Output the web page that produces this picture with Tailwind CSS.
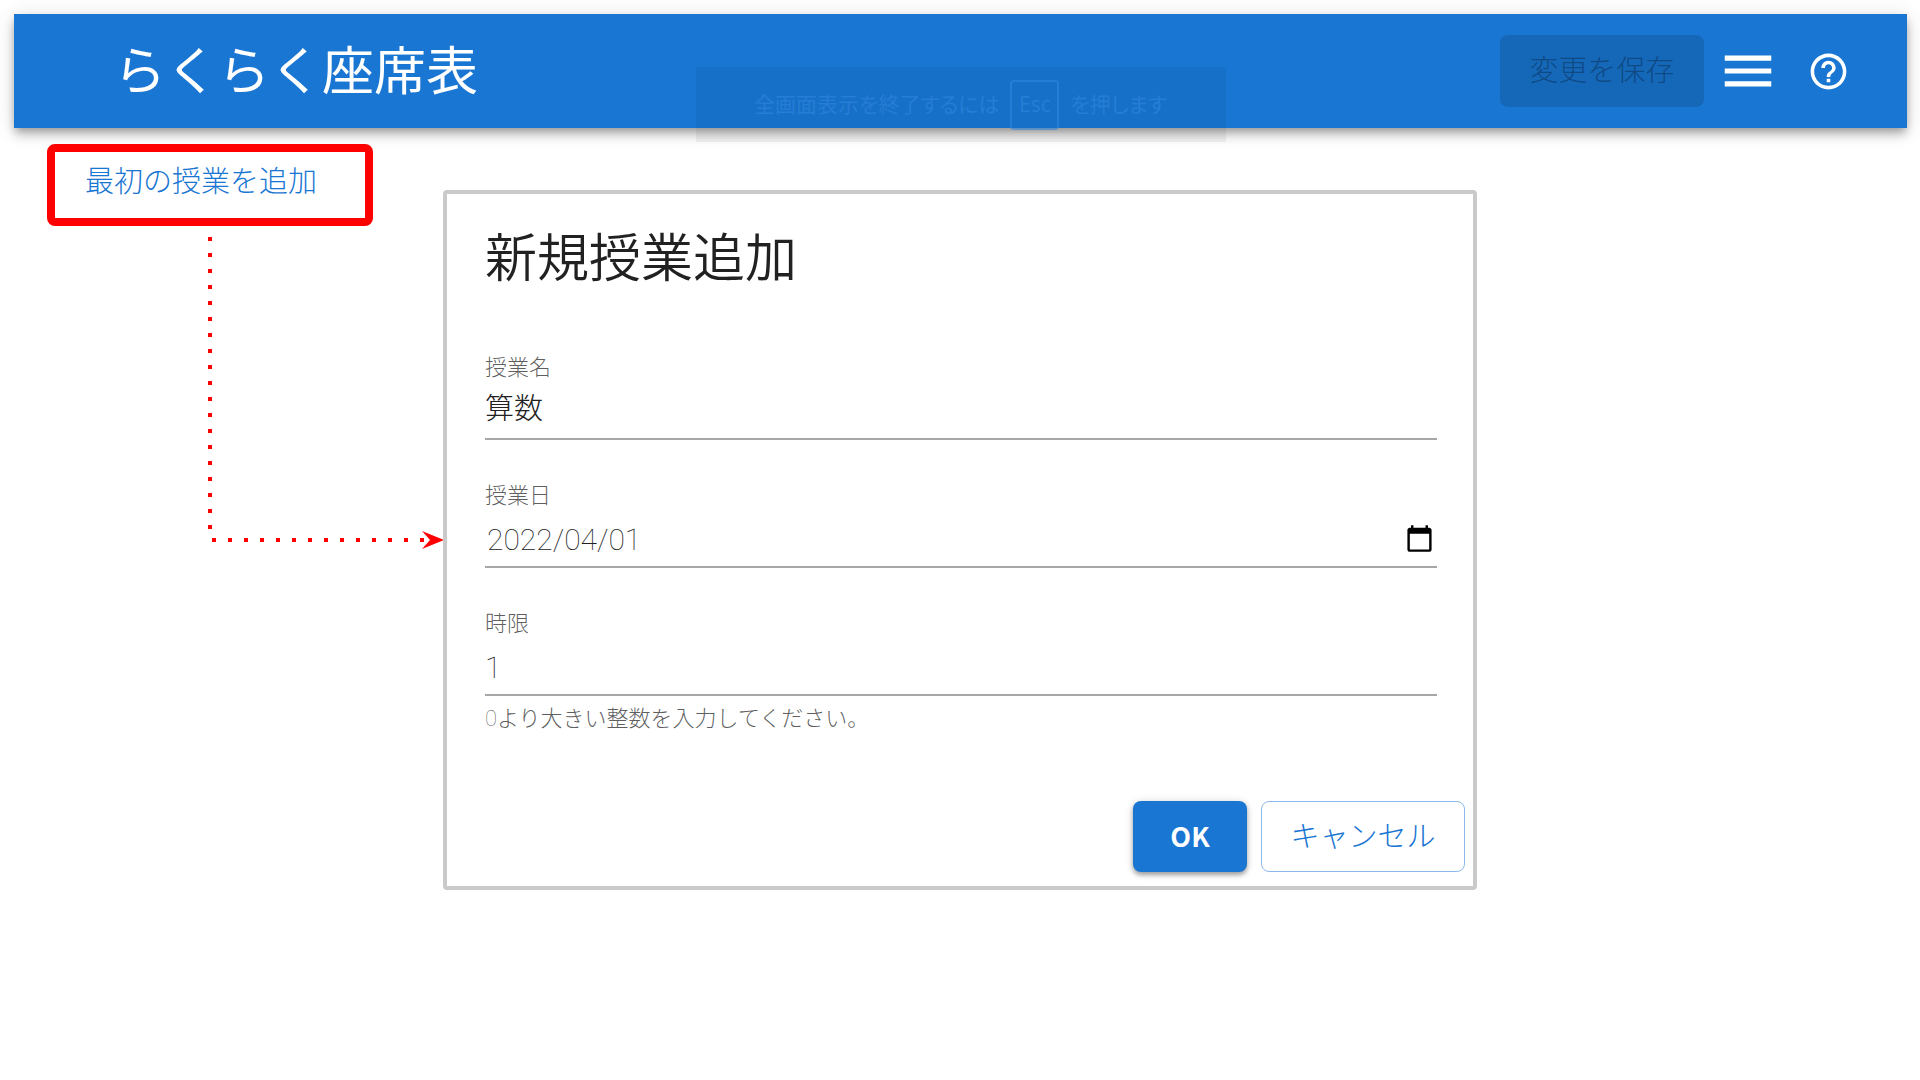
<!DOCTYPE html>
<html lang="ja">
<head>
<meta charset="utf-8">
<title>らくらく座席表</title>
<script src="https://cdn.jsdelivr.net/npm/@tailwindcss/browser@4"></script>
</head>
<body class="min-h-screen bg-white pt-[14px] font-['Roboto','Noto_Sans_CJK_JP',sans-serif] text-[#212121]">
<header class="relative ml-[14px] mr-[13px] flex h-[114px] items-center bg-[#1976d2] pl-[100px] pr-[57px] text-white shadow-[0_4px_8px_-2px_rgba(0,0,0,0.28),0_8px_10px_0_rgba(0,0,0,0.14),0_2px_20px_0_rgba(0,0,0,0.12)]">
  <h1 class="grow pt-1 text-[52px] font-normal leading-none">らくらく座席表</h1>
  <button disabled class="h-[72px] w-[204px] rounded-lg bg-black/12 pt-0.5 text-[29px] font-light text-black/30">変更を保存</button>
  <button aria-label="メニュー" class="ml-[13px]">
    <svg class="size-[62px] fill-current" viewBox="0 0 24 24"><path d="M3 18h18v-2H3v2zm0-5h18v-2H3v2zm0-7v2h18V6H3z"/></svg>
  </button>
  <button aria-label="ヘルプ" class="ml-7">
    <svg class="size-[43px] fill-current" viewBox="0 0 24 24"><path d="M11 18h2v-2h-2v2zm1-16C6.48 2 2 6.48 2 12s4.480 10 10 10 10-4.480 10-10S17.520 2 12 2zm0 18c-4.410 0-8-3.590-8-8s3.590-8 8-8 8 3.590 8 8-3.590 8-8 8zm0-14c-2.210 0-4 1.790-4 4h2c0-1.100.9-2 2-2s2 .9 2 2c0 2-3 1.750-3 5h2c0-2.250 3-2.500 3-5 0-2.210-1.790-4-4-4z"/></svg>
  </button>
  <div class="absolute inset-x-0 top-[53px] mx-auto flex h-[75px] w-[530px] items-center justify-center gap-[11px] bg-black/5 font-['Open_Sans','Noto_Sans_CJK_JP',sans-serif] text-[21px] text-[#2f86dd]/60 [font-feature-settings:'palt']">
    <span>全画面表示を終了するには</span>
    <kbd class="flex h-[50px] w-[49px] items-center justify-center rounded border-2 border-[#2f86dd]/60 font-['Open_Sans',sans-serif] text-[21px]">Esc</kbd>
    <span>を押します</span>
  </div>
</header>

<main class="grid grid-cols-[443px_minmax(0,1fr)_443px]">
  <div>
    <div class="ml-[47px] mr-[70px] mt-4 flex h-[82px] rounded-lg border-8 border-[#f00] pl-[30px] pt-[9px]">
      <a href="#lesson" class="text-[29px] font-light leading-[42px] text-[#1976d2]">最初の授業を追加</a>
    </div>
    <svg class="ml-[207px] h-[330px] w-[237px]" viewBox="0 0 237 330" aria-hidden="true">
      <path d="M3 11V305M5 314H219" fill="none" stroke="#f00" stroke-width="4" stroke-dasharray="4 12"/>
      <path d="M215 305L237 314 215 323 223 314z" fill="#f00"/>
    </svg>
  </div>

  <form id="lesson" class="mt-[62px] flex flex-col rounded-sm border-4 border-[#cacaca] pb-[14px]">
    <h2 class="px-[38px] pt-[36px] text-[52px] font-[350] leading-[60px]">新規授業追加</h2>
    <div class="mt-14 pl-[38px] pr-[36px]">
      <div class="mb-[34px] h-[94px] border-b-2 border-[#a6a6a6]">
        <label for="name" class="block text-[22px] font-light leading-[44px] text-black/65">授業名</label>
        <input id="name" type="text" value="算数" class="block h-[38px] w-full text-[29px] font-light leading-[38px] outline-none">
      </div>
      <div class="mb-[34px] flex h-[94px] flex-col border-b-2 border-[#a6a6a6]">
        <label for="date" class="block text-[22px] font-light leading-[44px] text-black/65">授業日</label>
        <div class="flex h-[42px] items-center">
          <input id="date" type="text" value="2022/04/01" class="min-w-0 grow pl-0.5 text-[30px] font-thin outline-none">
          <button type="button" aria-label="日付を選択" class="mr-[3px] pb-0.5">
            <svg class="size-[29px] fill-black" viewBox="0 0 24 24"><path d="M20 3h-1V1h-2v2H7V1H5v2H4c-1.100 0-2 .9-2 2v16c0 1.100.9 2 2 2h16c1.100 0 2-.9 2-2V5c0-1.100-.9-2-2-2zm0 18H4V8h16v13z"/></svg>
          </button>
        </div>
      </div>
      <div class="h-[94px] border-b-2 border-[#a6a6a6]">
        <label for="period" class="block text-[22px] font-light leading-[44px] text-black/65">時限</label>
        <input id="period" type="number" value="1" aria-describedby="hint" class="block h-[42px] w-full text-[30px] font-thin outline-none">
      </div>
      <p id="hint" class="mt-[5px] text-[22px] font-light leading-9 text-black/65"><span class="font-thin">0</span>より大きい整数を入力してください。</p>
    </div>
    <div class="mt-16 flex justify-end gap-[14px] pr-2">
      <button type="submit" class="h-[71px] w-[114px] rounded-lg bg-[#1976d2] font-['Noto_Sans_CJK_JP',sans-serif] text-[27px] font-bold text-white shadow-[0_3px_4px_rgba(0,0,0,0.3),0_1px_8px_rgba(0,0,0,0.16)]">OK</button>
      <button type="button" class="h-[71px] w-[204px] rounded-lg border border-[#1976d2]/50 pt-0.5 text-[29px] font-light text-[#1976d2]">キャンセル</button>
    </div>
  </form>
</main>
</body>
</html>
